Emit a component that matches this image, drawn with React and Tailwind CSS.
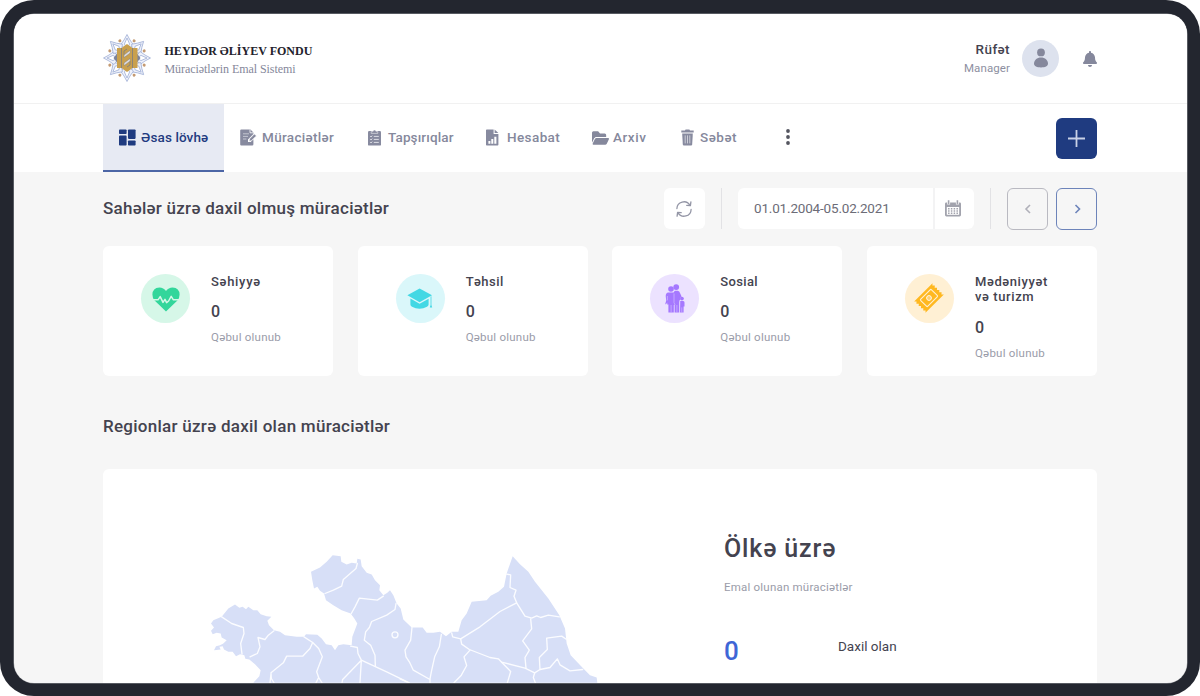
import React from "react";
import { FaFolderOpen, FaBell } from "react-icons/fa";

const Logo = () => (
  <svg viewBox="-24 -24 48 48" className="h-12 w-12 shrink-0">
    <g fill="#eef1fa" stroke="#9fafd6" strokeWidth="0.8" strokeLinejoin="round">
      {[0, 45, 90, 135, 180, 225, 270, 315].map((a) => (
        <g key={a} transform={`rotate(${a})`}>
          <path d="M0 -23.5 L3 -18 L6.5 -13 L0 -8 L-6.5 -13 L-3 -18 Z" />
          <path d="M0 -20 L2.6 -14 L0 -10 L-2.6 -14 Z" fill="#ffffff" />
        </g>
      ))}
    </g>
    <g fill="#c49a72">
      {[22.5, 67.5, 112.5, 157.5, 202.5, 247.5, 292.5, 337.5].map((a) => (
        <circle key={a} r="1.5" cx="0" cy="-18.6" transform={`rotate(${a})`} />
      ))}
    </g>
    <path d="M-13.5 0 L-9.5 -5 V5 Z M13.5 0 L9.5 -5 V5 Z" fill="#7d8399" />
    <path d="M-10 -10 H-5.5 L0 -14 L5.5 -10 H10.5 V10 H5.5 L0 14 L-5.5 10 H-10 Z" fill="#c9a04e" />
    <path
      d="M-5.5 -10 V10 M5.5 -10 V10 M-3 -3 V-7 L0 -9 M3 3 V7 L0 9"
      fill="none"
      stroke="#8a8377"
      strokeWidth="1"
    />
    <path d="M-3 -3 L3.2 -7.8 V-5 L-3 -0.4 Z M-3 5 L3.2 0.4 V3 L-3 7.8 Z" fill="#dcdce2" stroke="#8a8377" strokeWidth="0.5" />
  </svg>
);

const DashboardIcon = () => (
  <svg viewBox="0 0 17 17" className="h-[17px] w-[17px] shrink-0" fill="currentColor">
    <rect x="0" y="0.5" width="7.6" height="4.6" rx="0.8" />
    <rect x="0" y="6.6" width="7.6" height="9.9" rx="0.8" />
    <rect x="9" y="0.5" width="7.6" height="9.4" rx="0.8" />
    <rect x="9" y="11.4" width="7.6" height="5.1" rx="0.8" />
  </svg>
);

const EditDocIcon = () => (
  <svg viewBox="0 0 17 17" className="h-[17px] w-[17px] shrink-0">
    <path d="M1.2 0.5 H10.5 L13.4 3.4 V5 L8 10.4 V13 H10.6 L13.4 10.2 V15.3 Q13.4 16.5 12.2 16.5 H1.2 Q0.2 16.5 0.2 15.5 V1.5 Q0.2 0.5 1.2 0.5 Z" fill="#878a9f" />
    <path d="M3 4.8 H9 M3 7.4 H8 M3 10 H6.4" stroke="#c3c5d1" strokeWidth="1" />
    <path d="M10 0.5 V3.8 H13.4" fill="none" stroke="#fff" strokeWidth="0.8" />
    <path d="M9 12.2 L9.6 9.8 L14.4 4.9 L16.4 6.9 L11.4 11.7 Z" fill="#878a9f" stroke="#fff" strokeWidth="0.6" />
  </svg>
);

const ClipboardIcon = () => (
  <svg viewBox="0 0 13 17" className="h-[17px] w-[13px] shrink-0">
    <rect x="0" y="2" width="13" height="14.6" rx="1.2" fill="#878a9f" />
    <path d="M3.2 4.4 V2.6 H4.9 A1.6 1.6 0 0 1 8.1 2.6 H9.8 V4.4 Z" fill="#878a9f" stroke="#fff" strokeWidth="0.5" />
    <path d="M2.2 7.2 L3 8 L4.2 6.6 M2.2 10.2 L3 11 L4.2 9.6 M2.2 13.2 L3 14 L4.2 12.6 M5.8 7.4 H10.8 M5.8 10.4 H10.8 M5.8 13.4 H10.8" fill="none" stroke="#f4f4f7" strokeWidth="0.8" />
  </svg>
);

const ReportIcon = () => (
  <svg viewBox="0 0 13 17" className="h-[17px] w-[13px] shrink-0">
    <path d="M0.8 0.5 H7.6 V5 H12.4 V15.7 Q12.4 16.5 11.6 16.5 H0.8 Q0 16.5 0 15.7 V1.3 Q0 0.5 0.8 0.5 Z" fill="#878a9f" />
    <path d="M8.6 0.5 L12.4 4.1 H8.6 Z" fill="#878a9f" />
    <path d="M2.4 12 H4.4 V14.8 H2.4 Z M5.3 10 H7.3 V14.8 H5.3 Z M8.3 7.8 H10.4 V14.8 H8.3 Z" fill="#fff" />
  </svg>
);

const TrashIcon = () => (
  <svg viewBox="0 0 13 17" className="h-[17px] w-[13px] shrink-0">
    <path d="M0.3 1.6 H4 L4.6 0.5 H8.4 L9 1.6 H12.7 V3.4 H0.3 Z" fill="#878a9f" />
    <path d="M1.2 4.4 H11.8 L11.2 15.5 Q11.1 16.6 10.1 16.6 H2.9 Q1.9 16.6 1.8 15.5 Z" fill="#878a9f" />
    <path d="M4.2 6.4 V14.4 M6.5 6.4 V14.4 M8.8 6.4 V14.4" stroke="#d5d6de" strokeWidth="0.9" />
  </svg>
);

const RefreshIcon = () => (
  <svg viewBox="0 0 16 16" className="h-4 w-4" fill="none" stroke="#9496a6" strokeWidth="1.3" strokeLinecap="round" strokeLinejoin="round">
    <path d="M0.9 7.6 A7 7 0 0 1 13.9 4.2 M14.9 0.9 L14.4 4.6 L10.8 4.4" />
    <path d="M15.1 8.4 A7 7 0 0 1 2.1 11.8 M1.1 15.1 L1.6 11.4 L5.2 11.6" />
  </svg>
);

const CalendarIcon = () => (
  <svg viewBox="0 0 16 17" className="h-[17px] w-4">
    <path d="M1.2 2.4 H14.8 Q16 2.4 16 3.6 V15 Q16 16.4 14.6 16.4 H1.4 Q0 16.4 0 15 V3.6 Q0 2.4 1.2 2.4 Z" fill="#a2a3ad" />
    <rect x="1.8" y="7" width="12.4" height="7.8" fill="#fff" />
    <path d="M3.6 0.2 V4.4 M12.4 0.2 V4.4" stroke="#fff" strokeWidth="3" />
    <path d="M3.6 0.2 V4.2 M12.4 0.2 V4.2" stroke="#a2a3ad" strokeWidth="1.6" />
    <path d="M3.8 8.1 V14 M6.6 8.1 V14 M9.4 8.1 V14 M12.2 8.1 V14" stroke="#a2a3ad" strokeWidth="1.5" strokeDasharray="1.5 0.7" />
  </svg>
);

const Chevron = ({ d }) => (
  <svg viewBox="0 0 8 10" className="h-[10px] w-2" fill="none" stroke="currentColor" strokeWidth="1.6">
    <path d={d} />
  </svg>
);

const HeartPulseIcon = () => (
  <svg viewBox="0 0 28 25" className="mt-[2px] h-[25px] w-7">
    <path d="M14 24.6 L2.6 13.6 Q0.4 11.2 0.4 7.6 Q0.6 0.6 7.4 0.4 Q11.6 0.4 14 4 Q16.4 0.4 20.6 0.4 Q27.4 0.6 27.6 7.6 Q27.6 11.2 25.4 13.6 Z" fill="#33d69b" />
    <path d="M0 12.8 H6 L8.2 9.6 L11 15.4 L13 12.4 L14.6 15.6 L16.6 14 L19.2 9.4 L21.4 12.8 H28" fill="none" stroke="#d6f7e8" strokeWidth="1.5" strokeLinejoin="round" />
  </svg>
);

const GraduationIcon = () => (
  <svg viewBox="0 0 26 22" className="mt-px ml-[-1px] h-[22px] w-[26px]" fill="#42d8e4">
    <path d="M12.6 0.4 L25 7.2 L12.6 14.2 L0.4 7.2 Z" />
    <path d="M3.4 10.6 L12.6 15.8 L21.6 10.7 V16.6 Q21.6 18 20 18.8 Q16.4 20.8 12.5 20.8 T5 18.8 Q3.4 18 3.4 16.6 Z" />
    <path d="M23.6 8.6 L24.4 8.2 V17 L25.2 19.6 H22.8 L23.6 17 Z" />
  </svg>
);

const FamilyIcon = () => (
  <svg viewBox="0 0 20 29" className="mt-px h-[29px] w-5" fill="#a578ff">
    <circle cx="6" cy="5" r="2.8" />
    <circle cx="11.2" cy="3.1" r="2.9" />
    <circle cx="16.9" cy="14.6" r="1.9" />
    <path d="M3.2 8.4 H8.6 L9.8 6.8 H12.8 Q14.6 7 15 9 L16.6 12.4 Q14.2 14 15 16.4 L14.2 18 V28.4 H9.6 V21 H8.8 V28.4 H3.4 V20.6 H2.2 V18.6 L0.9 20.4 L0.3 19.8 L1.2 16.6 L0.7 12 Q0.9 8.6 3.2 8.4 Z" />
    <path d="M15.2 16.9 H18.2 Q19.5 17.1 19.5 18.4 V22.6 H18.6 V28.4 H15 Z" />
    <path d="M9 9.4 V18.6 L10 21 M11.9 21 V28.4 M6.1 21 V28.4 M14.6 16 V28.4 M16.8 23.4 V28.4 M2.4 12 V16.4" fill="none" stroke="#d9c8ff" strokeWidth="0.6" />
  </svg>
);

const TicketIcon = () => (
  <svg viewBox="-16 -16 32 32" className="h-8 w-8">
    <g transform="rotate(-45)">
      <path
        d="M-13 -8 H13 L11.2 -6.4 L13 -4.8 L11.2 -3.2 L13 -1.6 L11.2 0 L13 1.6 L11.2 3.2 L13 4.8 L11.2 6.4 L13 8 H-13 L-11.2 6.4 L-13 4.8 L-11.2 3.2 L-13 1.6 L-11.2 0 L-13 -1.6 L-11.2 -3.2 L-13 -4.8 L-11.2 -6.4 Z"
        fill="#ffb820"
      />
      <rect x="-7.6" y="-5" width="15.2" height="10" rx="1" fill="none" stroke="#fff0d4" strokeWidth="1.1" />
      <circle r="2.3" fill="#ffd070" stroke="#fff0d4" strokeWidth="1" />
    </g>
  </svg>
);

const NAV = [
  { label: "Müraciətlər", icon: <EditDocIcon />, box: "w-[128px] gap-[5px]", track: "tracking-[0.32px]" },
  { label: "Tapşırıqlar", icon: <ClipboardIcon />, box: "w-[118px] gap-[7px]", track: "tracking-[0.13px]" },
  { label: "Hesabat", icon: <ReportIcon />, box: "w-[106px] gap-[8px]", track: "tracking-[0.4px]" },
  { label: "Arxiv", icon: <FaFolderOpen className="h-[18px] w-[17px] shrink-0" preserveAspectRatio="none" />, box: "w-[89px] gap-1", track: "tracking-[0.55px]" },
  { label: "Səbət", icon: <TrashIcon />, box: "w-[88px] gap-[6px]", track: "tracking-[0.5px]" },
];

const CARDS = [
  { lines: ["Səhiyyə"], track: "tracking-[0.7px]", tint: "bg-[#d6f7e8]", icon: <HeartPulseIcon /> },
  { lines: ["Təhsil"], track: "tracking-[0.45px]", tint: "bg-[#daf7fa]", icon: <GraduationIcon /> },
  { lines: ["Sosial"], track: "tracking-[0.35px]", tint: "bg-[#ece2ff]", icon: <FamilyIcon /> },
  { lines: ["Mədəniyyət", "və turizm"], track: "tracking-[0.6px]", tint: "bg-[#fff0d4]", icon: <TicketIcon /> },
];

const Card = ({ lines, track, tint, icon }) => (
  <article className="flex h-[130px] w-[230px] items-start rounded-md bg-white pt-7 pl-[38px]">
    <div className={`flex h-[49px] w-[49px] shrink-0 items-center justify-center rounded-full ${tint}`}>{icon}</div>
    <div className="ml-[21px] w-[90px] whitespace-nowrap">
      <h3 className={`text-[13px] leading-[15.5px] font-medium ${track}`}>
        {lines.map((line) => (
          <span key={line} className="block">{line}</span>
        ))}
      </h3>
      <p className="mt-[13px] text-[16px] leading-[20px] font-medium">0</p>
      <p className="mt-[8px] text-[11.5px] leading-[14px] tracking-[0.23px] text-[#9a9ca9]">Qəbul olunub</p>
    </div>
  </article>
);

const RegionMap = () => (
  <svg viewBox="0 0 1230 428" className="h-[143px] w-[410px]">
    <path
      fill="#d7dff7"
      d="M160 428 L178 408 L182 390 L165 372 L148 358 L136 356 L133 345 L120 342 L108 348 L98 335 L85 335 L72 328 L68 318 L58 320 L62 328 L42 330 L48 318 L60 315 L70 310 L80 300 L65 292 L62 280 L50 278 L38 282 L33 272 L42 262 L33 250 L40 240 L65 230 L85 205 L105 193 L118 203 L128 200 L138 207 L145 200 L160 210 L172 210 L182 222 L200 228 L214 230 L202 242 L207 255 L222 270 L240 275 L255 285 L290 290 L312 290 L318 282 L352 284 L365 295 L378 312 L395 315 L405 330 L415 315 L430 312 L455 315 L457 290 L472 250 L463 235 L452 220 L425 210 L400 195 L378 180 L372 160 L360 152 L352 140 L342 145 L337 120 L333 95 L360 82 L380 65 L398 45 L422 48 L424 65 L440 73 L455 68 L470 70 L472 56 L482 58 L485 78 L500 98 L515 103 L525 120 L540 135 L538 150 L550 165 L562 158 L570 150 L580 165 L590 190 L602 205 L610 238 L635 262 L668 262 L680 278 L700 278 L720 275 L738 288 L755 275 L775 275 L785 240 L800 220 L815 185 L860 180 L872 167 L895 155 L912 140 L920 100 L938 48 L960 72 L985 95 L1005 125 L1045 175 L1078 225 L1095 265 L1100 310 L1112 345 L1150 385 L1170 405 L1190 412 L1192 428 Z"
    />
    <g fill="none" stroke="#fbfcff" strokeWidth="4" strokeLinejoin="round" strokeLinecap="round">
      <path d="M65 230 L95 250 L130 262 L132 280 L122 310 L126 342" />
      <path d="M222 272 L205 285 L195 298 L174 292 L180 320 L172 340 L150 350" />
      <path d="M312 290 L338 307 L356 325 L367 350 L350 395 L356 412 L348 428 M356 412 L366 428" />
      <path d="M338 307 L330 325 L308 348 L260 348 L250 368 L213 398 L214 415 L222 428 M213 400 L210 428" />
      <path d="M472 70 L468 85 L430 118 L425 138 L400 150 L375 160" />
      <path d="M550 168 L532 180 L478 174 L465 200 L454 220" />
      <path d="M588 190 L585 208 L560 225 L515 244 L508 262 L497 275 L493 300 L512 315 L525 345 L526 378" />
      <path d="M452 318 L472 322 L474 340 L484 360 L480 428 M484 360 L428 418 L426 428 M484 360 L560 395 L628 428" />
      <circle cx="585" cy="284" r="9" />
      <path d="M636 262 L632 300 L615 330 L618 350 L628 365 L640 390 L690 418 L690 428 M600 416 L622 426" />
      <path d="M724 283 L718 320 L704 350 L694 395 L690 416" />
      <path d="M755 278 L758 290 L782 296 L840 260 L900 214 L950 188" />
      <path d="M782 296 L785 312 L808 328 L870 352 L895 356 L905 366 L975 384 L1004 398 L1020 388 L1050 382 L1072 356 L1080 374 L1110 392 L1148 388" />
      <path d="M810 330 L792 350 L800 376 L784 405 L762 428" />
      <path d="M920 102 L932 104 L930 142 L948 150 L942 168 L950 188 L975 228 L995 234 L1010 227 L1022 232 L1045 225 L1078 230" />
      <path d="M992 236 L995 266 L968 302 L988 330 L975 352 L978 384" />
      <path d="M1100 298 L1085 288 L1040 294 L1042 328 L1018 352 L1020 388" />
      <path d="M905 366 L932 394 L922 428 M1004 398 L1000 412 L1006 428" />
    </g>
  </svg>
);

export default function App() {
  return (
    <div className="h-[696px] w-[1200px] bg-white font-['Roboto','Noto_Sans',sans-serif] text-[#44434f]">
      <div className="h-full w-full overflow-hidden rounded-[34px] bg-[#23262f] p-[13.5px]">
        <div className="flex h-full flex-col overflow-hidden rounded-[20px] bg-[#f6f6f6] shadow-[0_0_0_0.5px_#8b8d93]">
          <header className="flex h-[90px] shrink-0 items-center justify-between border-b border-[#f1f1f1] bg-white px-[89.5px]">
            <div className="flex items-center">
              <Logo />
              <div className="ml-[13.5px] font-['Liberation_Serif',serif]">
                <p className="mt-[4px] text-[12px] leading-[15px] font-bold tracking-[0.02px] whitespace-nowrap text-[#23222c]">HEYDƏR ƏLİYEV FONDU</p>
                <p className="mt-[3px] text-[12px] leading-[15px] tracking-[-0.06px] whitespace-nowrap text-[#85879a]">Müraciətlərin Emal Sistemi</p>
              </div>
            </div>
            <div className="flex items-center">
              <div className="text-right">
                <p className="text-[13.5px] leading-[18px] font-medium tracking-[0.4px]">Rüfət</p>
                <p className="mt-px text-[11.5px] leading-[18px] tracking-[0.1px] text-[#8d8fa1]">Manager</p>
              </div>
              <div className="ml-3 flex h-[37px] w-[37px] items-center justify-center rounded-full bg-[#dde2ee]">
                <svg viewBox="0 0 14 20" className="h-5 w-[14px]" fill="#85889c">
                  <circle cx="7" cy="4.4" r="3.9" />
                  <path d="M0 15.6 C0 12 3 9.4 7 9.4 S14 12 14 15.6 C14 18.6 11 19.4 7 19.4 S0 18.6 0 15.6 Z" />
                </svg>
              </div>
              <FaBell className="mt-px ml-6 h-4 w-[14px] text-[#85889c]" />
            </div>
          </header>

          <nav className="flex h-[68px] shrink-0 items-center bg-white px-[89.5px] text-[13.5px] font-medium whitespace-nowrap text-[#85889c]">
            <a className="flex h-full w-[121px] items-center gap-[5px] border-b-2 border-[#4c66a6] bg-[#e7eaf3] pt-[2px] pl-4 text-[#1f3b80]">
              <DashboardIcon />
              <span className="tracking-[0.1px]">Əsas lövhə</span>
            </a>
            {NAV.map(({ label, icon, box, track }) => (
              <a key={label} className={`flex items-center pl-4 ${box}`}>
                {icon}
                <span className={track}>{label}</span>
              </a>
            ))}
            <svg viewBox="0 0 4 16" className="mb-px ml-[33px] h-4 w-1" fill="#54555f">
              <circle cx="2" cy="2" r="1.9" />
              <circle cx="2" cy="8" r="1.9" />
              <circle cx="2" cy="14" r="1.9" />
            </svg>
            <button className="mt-[2px] ml-auto flex h-[41px] w-[41px] items-center justify-center rounded-md bg-[#1f3b80]">
              <svg viewBox="0 0 17 17" className="h-[17px] w-[17px]" stroke="#c9d1e6" strokeWidth="1.8">
                <path d="M8.5 0 V17 M0 8.5 H17" />
              </svg>
            </button>
          </nav>

          <main className="flex flex-col px-[89.5px]">
            <div className="mt-4 flex h-[42px] items-center justify-between">
              <h2 className="text-[17px] font-medium tracking-[0.27px] whitespace-nowrap">Sahələr üzrə daxil olmuş müraciətlər</h2>
              <div className="flex items-center">
                <button className="flex h-[41px] w-[41px] items-center justify-center rounded-md bg-white pr-[2px]">
                  <RefreshIcon />
                </button>
                <span className="ml-4 h-[41px] w-px bg-[#e2e2e5]" />
                <div className="ml-4 flex h-[41px] w-[236px] rounded-md bg-white">
                  <span className="flex w-[195px] items-center pl-4 text-[13.5px] tracking-[-0.18px] text-[#6c6c77]">01.01.2004-05.02.2021</span>
                  <span className="flex flex-1 items-center justify-center border-l-2 border-[#f3f3f4] pr-[3px]">
                    <CalendarIcon />
                  </span>
                </div>
                <span className="ml-4 h-[41px] w-px bg-[#e2e2e5]" />
                <button className="ml-4 flex h-[42px] w-[41px] items-center justify-center rounded-md border border-[#b9b9c1] text-[#b0b0b9]">
                  <Chevron d="M6 1 L2 5 L6 9" />
                </button>
                <button className="ml-2 flex h-[42px] w-[41px] items-center justify-center rounded-md border border-[#6d84ba] text-[#6d84ba]">
                  <Chevron d="M2.5 1 L6.5 5 L2.5 9" />
                </button>
              </div>
            </div>

            <section className="mt-4 flex justify-between">
              {CARDS.map((c) => (
                <Card key={c.lines[0]} {...c} />
              ))}
            </section>

            <h2 className="mt-[38px] text-[17px] leading-6 font-medium tracking-[0.27px] whitespace-nowrap">Regionlar üzrə daxil olan müraciətlər</h2>

            <section className="mt-[31px] flex h-[240px] items-start rounded-t-md bg-white">
              <div className="pt-[71px] pl-[97px]">
                <RegionMap />
              </div>
              <div className="ml-[114px] pt-[63px]">
                <h1 className="text-[25px] leading-[34px] font-medium tracking-[0.85px]">Ölkə üzrə</h1>
                <p className="mt-[13px] text-[11.5px] leading-4 tracking-[0.21px] text-[#9a9ca9]">Emal olunan müraciətlər</p>
                <div className="mt-[40px] flex items-start">
                  <span className="w-[114px] text-[26px] leading-[32px] font-medium text-[#3f66d6]">0</span>
                  <span className="pt-px text-[13.5px] leading-5">Daxil olan</span>
                </div>
              </div>
            </section>
          </main>
        </div>
      </div>
    </div>
  );
}
